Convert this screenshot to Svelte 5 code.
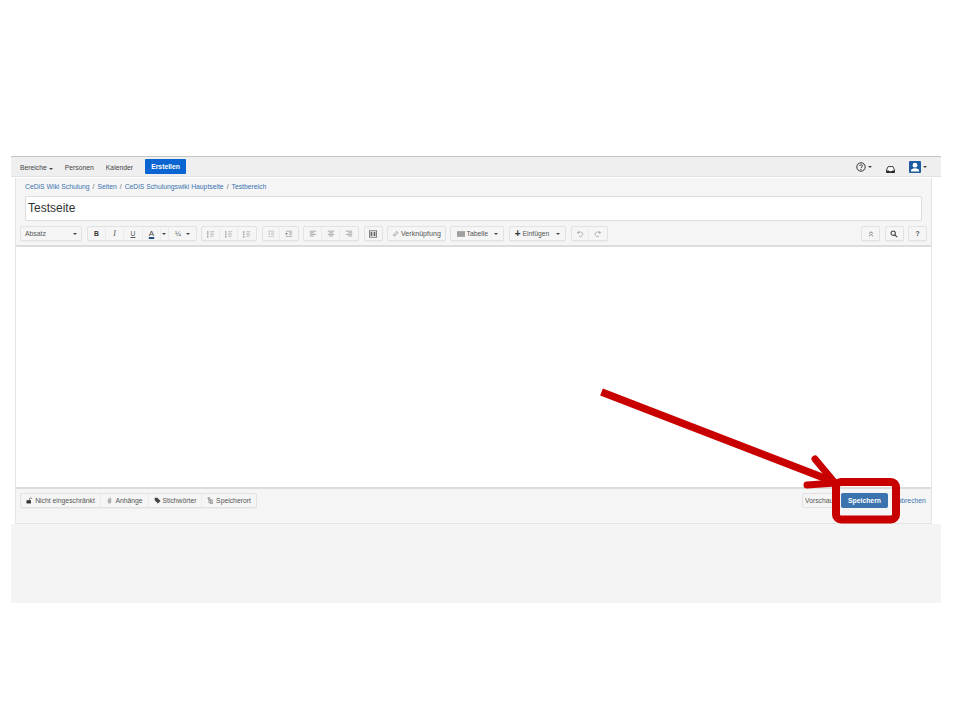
<script>
  const crumbs = ['CeDiS Wiki Schulung', 'Seiten', 'CeDiS Schulungswiki Hauptseite', 'Testbereich'];
</script>

{#snippet lines(kind)}
  <svg class="ico" viewBox="0 0 10 10" aria-hidden="true">
    {#if kind === 'ul' || kind === 'ol' || kind === 'task'}
      <path d="M1 1.5v2M1 4.5v2M1 7.5v2" stroke="#777" stroke-width="1.2" />
      <path d="M4 2h5M4 4h4M4 6h5M4 8h4" stroke="#aaa" stroke-width=".8" />
    {:else if kind === 'out'}
      <path d="M1 1.5h8M5 3.5h4M5 5.5h4M1 8h8" stroke="#bbb" stroke-width=".9" />
      <path d="M3.5 3v3.4L1 4.7z" fill="#bbb" />
    {:else if kind === 'in'}
      <path d="M1 1.5h8M5 3.5h4M5 5.5h4M1 8h8" stroke="#999" stroke-width=".9" />
      <path d="M1 3v3.4l2.5-1.7z" fill="#666" />
    {:else if kind === 'left'}
      <path d="M1 1.5h8M1 3.5h5M1 5.5h8M1 7.5h5" stroke="#999" stroke-width="1" />
    {:else if kind === 'center'}
      <path d="M1 1.5h8M2.5 3.5h5M1 5.5h8M2.5 7.5h5" stroke="#999" stroke-width="1" />
    {:else if kind === 'right'}
      <path d="M1 1.5h8M4 3.5h5M1 5.5h8M4 7.5h5" stroke="#999" stroke-width="1" />
    {/if}
  </svg>
{/snippet}

<div class="shell">
  <nav class="nav">
    <span class="nav-item">Bereiche <i class="caret dark"></i></span>
    <span class="nav-item">Personen</span>
    <span class="nav-item">Kalender</span>
    <span class="create">Erstellen</span>
    <div class="nav-right">
      <span class="nav-icon help">
        <svg viewBox="0 0 10 10" class="h10"><circle cx="5" cy="5" r="4.2" fill="none" stroke="#333" stroke-width="1"/><path d="M3.6 3.9c.2-1.6 2.9-1.5 2.9 0 0 1-1.4 1-1.4 2.1" fill="none" stroke="#333" stroke-width=".9"/><circle cx="5" cy="7.4" r=".6" fill="#333"/></svg>
        <i class="caret dark"></i>
      </span>
      <span class="nav-icon bell">
        <svg viewBox="0 0 10 8" class="inbox"><path d="M2.2.7h5.6L9.5 4.5v3h-9v-3z" fill="#fff" stroke="#222" stroke-width="1"/><path d="M.5 5H3l.6 1h2.8L7 5h2.5v2.6h-9z" fill="#222"/></svg>
      </span>
      <span class="nav-icon user">
        <svg viewBox="0 0 12 12" class="avatar"><rect width="12" height="12" rx="1" fill="#1d5aa0"/><circle cx="6" cy="4.2" r="2.4" fill="#fff"/><path d="M1.8 10.4c0-2.4 1.8-3.1 4.2-3.1s4.2.7 4.2 3.1z" fill="#fff"/></svg>
        <i class="caret dark"></i>
      </span>
    </div>
  </nav>

  <main class="frame">
    <div class="crumbs">
      {#each crumbs as c, i}
        {#if i > 0}<span class="sep">/</span>{/if}<a href="#top">{c}</a>
      {/each}
    </div>
    <div class="title">Testseite</div>

    <div class="toolbar">
      <div class="group"><span class="btn absatz"><span>Absatz</span><i class="caret dark"></i></span></div>
      <div class="group format">
        <span class="btn w18 strong">B</span>
        <span class="btn w18 italic">I</span>
        <span class="btn w19 under">U</span>
        <span class="btn w18 color">A</span>
        <span class="btn w8"><i class="caret dark"></i></span>
        <span class="btn w27 sub"><span>¼</span><i class="caret dark"></i></span>
      </div>
      <div class="group">
        <span class="btn w18">{@render lines('ul')}</span>
        <span class="btn w18">{@render lines('ol')}</span>
        <span class="btn w18">{@render lines('task')}</span>
      </div>
      <div class="group">
        <span class="btn w17">{@render lines('out')}</span>
        <span class="btn w18">{@render lines('in')}</span>
      </div>
      <div class="group">
        <span class="btn w18">{@render lines('left')}</span>
        <span class="btn w18">{@render lines('center')}</span>
        <span class="btn w18">{@render lines('right')}</span>
      </div>
      <div class="group">
        <span class="btn w17"><svg class="ico" viewBox="0 0 10 10"><rect x=".5" y="1" width="9" height="8" fill="none" stroke="#666"/><path d="M2 2.5h2.2v5H2zM5.800 2.5H8v5H5.800z" fill="#666"/></svg></span>
      </div>
      <div class="group">
        <span class="btn link"><svg class="ico small" viewBox="0 0 10 10"><path d="M6 1.5l2.5 2.5-4.500 4.500c-1 .8-2.500-.7-1.700-1.700L6.500 2.800" fill="none" stroke="#777" stroke-width=".9"/></svg>Verknüpfung</span>
      </div>
      <div class="group">
        <span class="btn table"><svg class="tbl" viewBox="0 0 10 7"><rect width="10" height="7" fill="#999"/><path d="M0 2.300h10M0 4.600h10M3.300 0v7M6.600 0v7" stroke="#bbb" stroke-width=".4"/></svg>Tabelle<i class="caret dark"></i></span>
      </div>
      <div class="group">
        <span class="btn insert"><b class="plus">+</b>Einfügen<i class="caret dark"></i></span>
      </div>
      <div class="group">
        <span class="btn w17 off"><svg class="ico" viewBox="0 0 10 10"><path d="M2.500 5a3 3 0 1 1 1.200 2.800" fill="none" stroke="#aaa"/><path d="M.8 3.600h3.200V1z" fill="#aaa"/></svg></span>
        <span class="btn w18 off"><svg class="ico" viewBox="0 0 10 10"><path d="M7.500 5a3 3 0 1 0-1.200 2.800" fill="none" stroke="#aaa"/><path d="M9.200 3.600H6V1z" fill="#aaa"/></svg></span>
      </div>
      <div class="tools-right">
        <span class="btn solo"><svg class="ico" viewBox="0 0 10 10"><path d="M2.500 4.600L5 2.200l2.500 2.400M2.500 7.800L5 5.400l2.500 2.400" fill="none" stroke="#666"/></svg></span>
        <span class="btn solo"><svg class="ico" viewBox="0 0 10 10"><circle cx="4" cy="4" r="2.700" fill="none" stroke="#444" stroke-width="1.300"/><path d="M6 6l3 3" stroke="#444" stroke-width="1.500"/></svg></span>
        <span class="btn solo q">?</span>
      </div>
    </div>

    <div class="editor"></div>

    <footer class="foot">
      <div class="group">
        <span class="btn f80"><svg class="ico small" viewBox="0 0 10 10"><rect x=".8" y="4.600" width="6.200" height="4.600" fill="#333"/><path d="M5 4.600V2.800c0-2 3.400-2 3.400 0" fill="none" stroke="#555"/></svg>Nicht eingeschränkt</span>
        <span class="btn f48"><svg class="ico small" viewBox="0 0 10 10"><path d="M3.200 3v4.200c0 2.300 3.600 2.300 3.600 0V2.600c0-1.600-2.400-1.600-2.400 0v4.400c0 .7 1.200.7 1.200 0V3.400" fill="none" stroke="#777" stroke-width=".8"/></svg>Anhänge</span>
        <span class="btn f53"><svg class="ico small" viewBox="0 0 10 10"><path d="M1 1h3.800L9.400 5.600 5.600 9.400 1 4.800z" fill="#444"/></svg>Stichwörter</span>
        <span class="btn f56"><svg class="ico small" viewBox="0 0 10 10"><path d="M1.500 1h2.500v2H1.500zM5 4h2.500v2H5zM5 7.400h3.200v1.800H5zM2.700 3v5.300H5M2.700 5H5" fill="none" stroke="#666" stroke-width=".8"/></svg>Speicherort</span>
      </div>
      <div class="foot-right">
        <span class="btn preview">Vorschau</span>
        <span class="save">Speichern</span>
        <a class="cancel" href="#top">Abbrechen</a>
      </div>
    </footer>
  </main>
  <div class="below"></div>

  <svg class="marks" viewBox="0 0 960 720" aria-hidden="true">
    <g fill="none" stroke="#c80000" stroke-linecap="round" stroke-linejoin="round">
      <path d="M601.500 392L832 481" stroke-width="7.500" stroke-linecap="butt" />
      <path d="M815 459l20 24-28 2" stroke-width="7" />
      <rect x="836" y="482" width="60" height="37.500" rx="5" stroke-width="8" />
    </g>
  </svg>
</div>

<style>
  :global(body) { margin: 0; background: #fff; }
  .shell {
    position: relative;
    width: 960px;
    height: 720px;
    box-sizing: border-box;
    padding: 156px 19px 0 11px;
    font-family: "Liberation Sans", Arial, sans-serif;
    font-size: 6.800px;
    color: #333;
    overflow: hidden;
  }
  .nav {
    display: flex;
    align-items: center;
    height: 19px;
    background: #efefef;
    border-top: 1px solid #c4c4c4;
    border-bottom: 1px solid #e2e2e2;
    padding-left: 9px;
    gap: 12px;
    color: #444;
  }
  .nav-item { white-space: nowrap; position: relative; top: 1px; }
  .create {
    background: #0a64d2;
    color: #fff;
    font-weight: 700;
    height: 15px;
    line-height: 15px;
    width: 41px;
    text-align: center;
    border-radius: 1px;
  }
  .nav-right { margin-left: auto; display: flex; align-items: center; padding-right: 14px; }
  .nav-icon { display: inline-flex; align-items: center; gap: 2px; }
  .help { width: 30px; }
  .bell { width: 23px; padding-top: 5px; }
  .h10 { width: 10px; height: 10px; }
  .inbox { width: 9px; height: 7px; }
  .avatar { width: 12px; height: 12px; }
  .caret {
    display: inline-block;
    width: 0; height: 0;
    border-left: 2px solid transparent;
    border-right: 2px solid transparent;
    border-top: 2px solid #666;
  }
  .caret.dark { border-top-color: #444; }
  .frame {
    box-sizing: border-box;
    width: 917px;
    height: 346px;
    margin: 1px 0 0 4px;
    background: #f5f5f5;
    border: 1px solid #e4e4e4;
    border-top: 0;
    display: flex;
    flex-direction: column;
  }
  .crumbs { height: 17px; line-height: 18px; padding-left: 9px; color: #666; white-space: nowrap; }
  .crumbs a { color: #3b73af; text-decoration: none; }
  .sep { margin: 0 3px; }
  .title {
    box-sizing: border-box;
    height: 25px;
    margin: 1px 9px 0;
    background: #fff;
    border: 1px solid #ddd;
    border-radius: 2px;
    font-size: 12px;
    line-height: 23px;
    padding-left: 2px;
    color: #333;
  }
  .toolbar {
    display: flex;
    align-items: flex-start;
    gap: 4.400px;
    height: 26px;
    padding: 5px 4px 0 4px;
    box-sizing: border-box;
    border-bottom: 2px solid #dcdcdc;
  }
  .format { margin-left: .6px; }
  .group {
    display: flex;
    height: 15px;
    background: #f5f5f5;
    border: 1px solid #e2e2e2;
    border-radius: 2px;
    box-sizing: border-box;
    box-shadow: 0 1px 0 #ececec;
  }
  .btn {
    box-sizing: border-box;
    height: 13px;
    display: inline-flex;
    align-items: center;
    justify-content: center;
    gap: 2px;
    white-space: nowrap;
    border-right: 1px solid #ebebeb;
    color: #555;
  }
  .group .btn:last-child { border-right: 0; }
  .w8 { width: 8px; }
  .w17 { width: 17px; }
  .w18 { width: 18px; }
  .w19 { width: 19px; }
  .w27 { width: 27px; gap: 5px; }
  .absatz { width: 60px; justify-content: space-between; padding: 0 4px; }
  .strong { font-weight: 700; color: #333; }
  .italic { font-style: italic; font-family: "Liberation Serif", serif; font-size: 8px; }
  .under { text-decoration: underline; }
  .color { text-decoration: underline 2px #205081; text-underline-offset: 1px; color: #444; font-size: 8px; }
  .sub { font-size: 7px; }
  .ico { width: 8px; height: 8px; flex: none; }
  .ico.small { width: 7px; height: 7px; }
  .tbl { width: 8px; height: 6px; }
  .plus { font-size: 10px; line-height: 10px; color: #333; }
  .link { width: 57px; font-size: 7.100px; }
  .table { width: 52px; }
  .table .caret { margin-left: 4px; }
  .insert { width: 55.500px; }
  .insert .caret { margin-left: 5px; }
  .tools-right { margin-left: auto; display: flex; gap: 4.400px; }
  .btn.solo {
    width: 19px;
    height: 15px;
    background: #f5f5f5;
    border: 1px solid #e2e2e2;
    border-radius: 2px;
    box-shadow: 0 1px 0 #ececec;
  }
  .q { font-weight: 700; }
  .editor { flex: 1; background: #fff; }
  .foot {
    height: 36px;
    box-sizing: border-box;
    border-top: 2px solid #dcdcdc;
    padding: 4px 4px 0 4px;
    display: flex;
    justify-content: space-between;
    align-items: flex-start;
  }
  .f80 { width: 80px; }
  .f48 { width: 48px; }
  .f53 { width: 53px; }
  .f56 { width: 54px; }
  .foot-right { display: flex; align-items: flex-start; }
  .btn.preview {
    width: 40px;
    height: 15px;
    justify-content: flex-start;
    padding-left: 2px;
    background: #f5f5f5;
    border: 1px solid #e2e2e2;
    border-radius: 2px;
  }
  .save {
    margin-left: -1px;
    width: 47px;
    height: 15px;
    line-height: 15px;
    text-align: center;
    font-weight: 700;
    color: #fff;
    background: #3b73af;
    border-radius: 2px;
    position: relative;
  }
  .cancel { width: 34px; margin-left: 5px; line-height: 15px; color: #3b73af; text-decoration: none; white-space: nowrap; }
  .below { height: 79px; background: #f4f4f4; }
  .marks {
    position: absolute;
    left: 0; top: 0;
    width: 960px;
    height: 720px;
    pointer-events: none;
  }
</style>
